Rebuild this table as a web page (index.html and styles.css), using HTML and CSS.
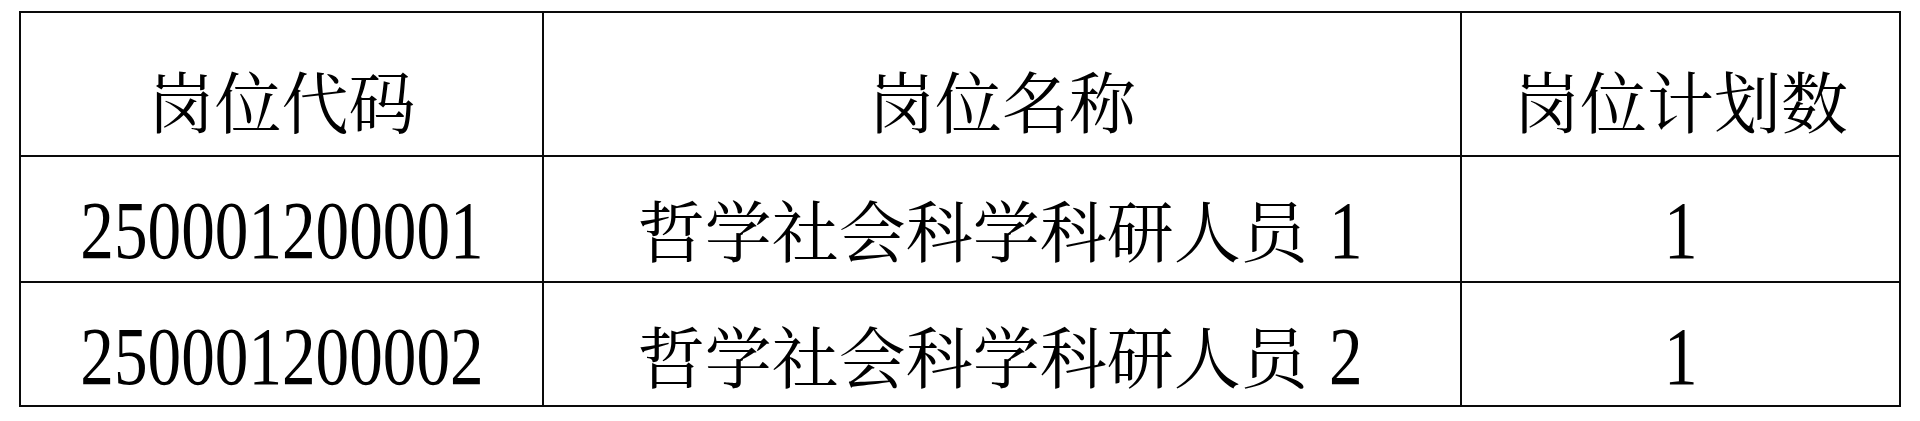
FILE: index.html
```html
<!DOCTYPE html>
<html lang="zh-CN">
<head>
<meta charset="utf-8">
<title>岗位计划</title>
<link rel="stylesheet" href="styles.css">
</head>
<body>
<div class="sheet">
  <div class="cell head">岗位代码</div>
  <div class="cell head">岗位名称</div>
  <div class="cell head">岗位计划数</div>

  <div class="cell row"><span class="num">250001200001</span></div>
  <div class="cell row">哲学社会科学科研人员 <span class="num">1</span></div>
  <div class="cell row"><span class="num">1</span></div>

  <div class="cell row"><span class="num">250001200002</span></div>
  <div class="cell row">哲学社会科学科研人员 <span class="num">2</span></div>
  <div class="cell row"><span class="num">1</span></div>
</div>
</body>
</html>
```

FILE: styles.css
```css
html, body {
  margin: 0;
  padding: 0;
  background: #ffffff;
}

.sheet {
  margin: 11px 0 0 19px;
  width: 1882px;
  box-sizing: border-box;
  display: grid;
  grid-template-columns: 523px 918px 439px;
  grid-template-rows: 144px 126px 124px;
  border-top: 2px solid #0a0a0a;
  border-left: 2px solid #0a0a0a;
  font-family: "Noto Serif CJK SC", "Noto Sans CJK SC", sans-serif;
  font-size: 67px;
  line-height: 80px;
  color: #000;
}

.cell {
  box-sizing: border-box;
  border-right: 2px solid #0a0a0a;
  border-bottom: 2px solid #0a0a0a;
  text-align: center;
  white-space: nowrap;
  overflow: hidden;
}

.head {
  padding-top: 46px;
}

.row {
  padding-top: 31px;
}

.num {
  display: inline-block;
  font-family: "Liberation Serif", serif;
  font-size: 83px;
  line-height: 80px;
  transform: scaleX(0.81);
  vertical-align: -1px;
}
```
